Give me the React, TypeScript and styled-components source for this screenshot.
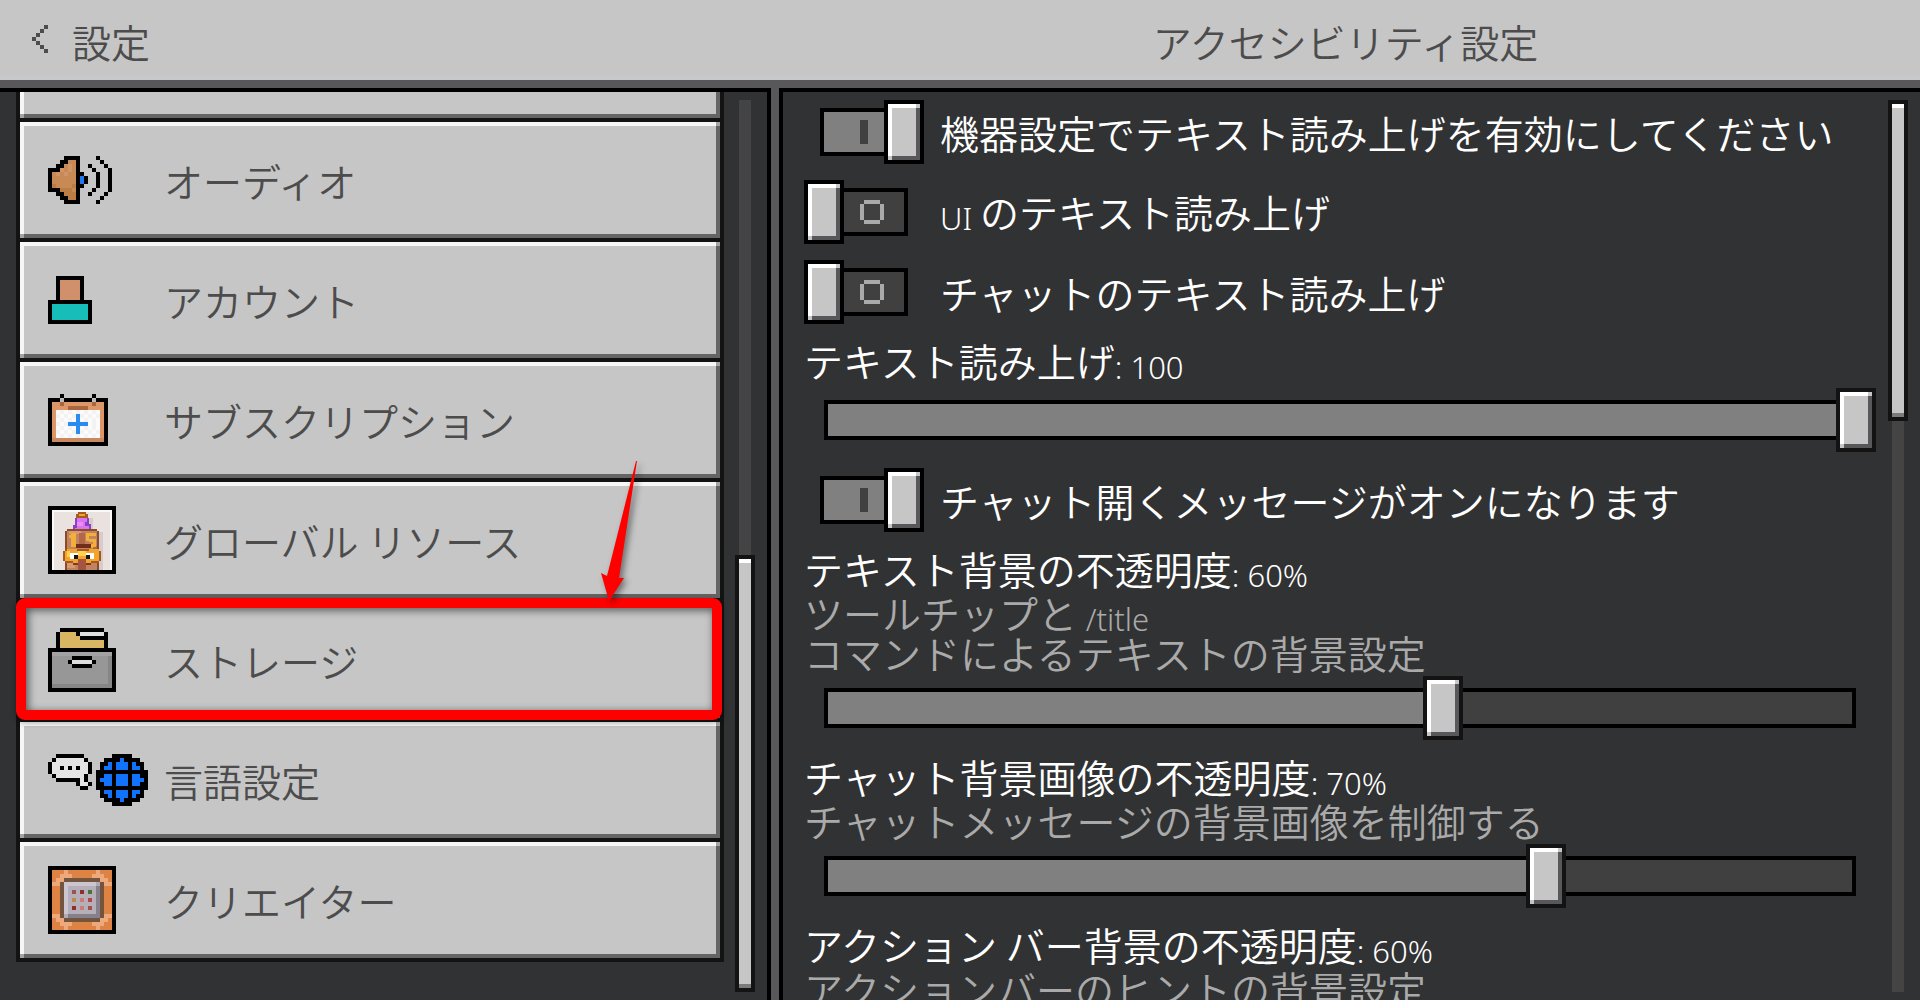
import React, { useState } from "react";
import styled, { createGlobalStyle, css } from "styled-components";

const GlobalStyle = createGlobalStyle`
  *, *::before, *::after { box-sizing: border-box; }
  body { margin: 0; background: #313233; }
  button, input { font: inherit; color: inherit; }
`;

const bevel = (light: string, face: string, dark: string, corner: string) => css`
  background:
    linear-gradient(${corner}, ${corner}) right top / 4px 4px no-repeat,
    linear-gradient(${corner}, ${corner}) left bottom / 4px 4px no-repeat,
    linear-gradient(${light}, ${light}) left top / 100% 4px no-repeat,
    linear-gradient(${light}, ${light}) left top / 4px 100% no-repeat,
    linear-gradient(${dark}, ${dark}) left bottom / 100% 4px no-repeat,
    linear-gradient(${dark}, ${dark}) right top / 4px 100% no-repeat,
    ${face};
`;

const Screen = styled.div`
  height: 100vh;
  display: grid;
  grid-template-rows: auto minmax(0, 1fr);
  background: #58585a;
  color: #fff;
  font-family: "Noto Sans CJK JP", "Noto Sans", sans-serif;
  font-size: 39px;
  font-weight: 350;
  line-height: 40px;
  overflow: hidden;
`;

const columns = css`
  display: grid;
  grid-template-columns: minmax(0, 771fr) minmax(0, 1141fr);
  column-gap: 8px;
`;

const Header = styled.header`
  ${columns}
  height: 80px;
  align-items: center;
  background: linear-gradient(#c6c6c6 76px, #c6c8ca 76px);
  color: #4c4c4c;
`;

const BackButton = styled.button`
  display: flex;
  align-items: center;
  gap: 24px;
  justify-self: start;
  padding: 2px 0 0 32px;
  border: 0;
  background: none;
  line-height: 40px;
`;

const Title = styled.h1`
  margin: 0;
  padding: 2px 8px 0 0;
  font: inherit;
  text-align: center;
`;

const Panels = styled.main`
  ${columns}
  padding-top: 8px;
`;

const Sidebar = styled.nav`
  display: grid;
  grid-template-columns: minmax(0, 1fr) 20px;
  column-gap: 11px;
  padding: 0 12px 0 16px;
  border: solid #000;
  border-width: 4px 4px 0 0;
  background: #313233;
  overflow: hidden;
`;

const ListArea = styled.div`
  min-height: 0;
  display: flex;
  flex-direction: column;
  justify-content: flex-end;
  padding-bottom: 38px;
`;

const List = styled.ul`
  display: flex;
  flex-direction: column;
  gap: 4px;
  margin: 0;
  padding: 4px;
  list-style: none;
  background: #131313;
`;

const Item = styled.li`
  position: relative;
`;

const face = css`
  ${bevel("#f7f7f7", "#c6c6c6", "#656565", "#a4a4a4")}
`;

const EmptyItem = styled.li`
  height: 116px;
  ${face}
`;

const ItemButton = styled.button`
  ${face}
  display: flex;
  align-items: center;
  width: 100%;
  height: 116px;
  padding: 0 28px;
  border: 0;
  color: #4c4c4c;
  text-align: left;
`;

const IconSlot = styled.span`
  flex: 0 0 116px;
  display: flex;
`;

const Highlight = styled.div`
  position: absolute;
  inset: -4px -2px -2px -4px;
  z-index: 1;
  border: 10px solid #fe0000;
  border-radius: 9px;
  box-shadow: 0 2px 6px rgba(0, 0, 0, 0.4), inset 2px 2px 8px rgba(0, 0, 0, 0.6);
  pointer-events: none;
`;

const Arrow = styled.svg`
  position: absolute;
  right: 80px;
  top: -143px;
  z-index: 2;
  overflow: visible;
  filter: drop-shadow(3px 3px 3px rgba(0, 0, 0, 0.45));
  pointer-events: none;
`;

const ScrollColumn = styled.div<{ $end?: boolean }>`
  display: flex;
  flex-direction: column;
  justify-content: ${(p) => (p.$end ? "flex-end" : "flex-start")};
  margin: 8px 0;
  background: linear-gradient(#444, #444) center / 12px 100% no-repeat;
`;

const ScrollThumb = styled.div<{ $size: number }>`
  height: ${(p) => p.$size}%;
  border: 4px solid #131313;
  background:
    linear-gradient(#fff, #fff) top / 100% 4px no-repeat,
    linear-gradient(#7b7b7b, #7b7b7b) bottom / 100% 4px no-repeat,
    #c6c6c6;
`;

const Content = styled.section`
  display: grid;
  grid-template-columns: minmax(0, 1fr) 20px;
  column-gap: 12px;
  padding: 0 12px 0 21px;
  border: solid #000;
  border-width: 4px 0 0 4px;
  background: #313233;
  overflow: hidden;
`;

const Settings = styled.div`
  min-height: 0;
  display: flex;
  flex-direction: column;
  gap: 16px;
  padding-top: 8px;
  white-space: nowrap;
  & > * { flex: none; }
`;

const ToggleRow = styled.label`
  display: flex;
  align-items: center;
  gap: 16px;
  height: 64px;
`;

const fill = (c: string) => `linear-gradient(${c}, ${c})`;
const knob = bevel("#fff", "#c6c6c6", "#58585a", "#c6c6c6");

const Switch = styled.input`
  appearance: none;
  flex: none;
  width: 120px;
  height: 64px;
  margin: 0;
  background:
    ${fill("#aaa")} 60px 20px / 16px 4px no-repeat,
    ${fill("#aaa")} 60px 40px / 16px 4px no-repeat,
    ${fill("#aaa")} 56px 24px / 4px 16px no-repeat,
    ${fill("#aaa")} 76px 24px / 4px 16px no-repeat,
    ${fill("#404040")} 20px 12px / 80px 40px no-repeat,
    ${fill("#000")} 16px 8px / 88px 48px no-repeat;

  &::before {
    content: "";
    display: block;
    width: 40px;
    height: 64px;
    border: 4px solid #000;
    ${knob}
  }

  &:checked {
    background:
      ${fill("#404040")} 56px 20px / 8px 24px no-repeat,
      ${fill("#808080")} 20px 12px / 80px 40px no-repeat,
      ${fill("#000")} 16px 8px / 88px 48px no-repeat;
  }

  &:checked::before { margin-left: 80px; }
`;

const Field = styled.div`
  display: flex;
  flex-direction: column;
`;

const FieldLabel = styled.label`
  display: block;
  height: 40px;
  margin-bottom: 4px;
`;

const Description = styled.p`
  margin: 0;
  color: #aaa;
`;

const Line = styled.span`
  display: block;
  height: 40px;
`;

const Latin = styled.span`
  font-family: "Noto Sans", sans-serif;
  font-size: 31px;
  font-weight: 300;
  line-height: 1;
  vertical-align: -2px;
`;

const Range = styled.input`
  appearance: none;
  display: block;
  width: 100%;
  height: 64px;
  margin: 4px 0 0;
  background:
    ${fill("#808080")} 24px 16px / calc((100% - 40px) * var(--value) - 4px) 32px no-repeat,
    ${fill("#404040")} 24px 16px / calc(100% - 48px) 32px no-repeat,
    ${fill("#000")} 20px 12px / calc(100% - 40px) 40px no-repeat;

  &::-webkit-slider-thumb {
    appearance: none;
    width: 40px;
    height: 64px;
    box-sizing: border-box;
    border: 4px solid #131313;
    ${knob}
  }
`;

const Svg = styled.svg`
  display: block;
  flex: none;
  shape-rendering: crispEdges;
`;

type Palette = Record<string, string>;

/* Draws one 4px square per character; characters without a colour stay clear. */
function PixelArt({ rows, palette }: { rows: string[]; palette: Palette }) {
  const cols = Math.max(...rows.map((r) => r.length));
  const cells: React.ReactNode[] = [];
  rows.forEach((row, y) => {
    let x = 0;
    while (x < row.length) {
      const key = row[x];
      let end = x + 1;
      while (end < row.length && row[end] === key) end++;
      if (palette[key]) cells.push(<rect key={`${x}-${y}`} x={x} y={y} width={end - x} height={1} fill={palette[key]} />);
      x = end;
    }
  });
  return (
    <Svg width={cols * 4} height={rows.length * 4} viewBox={`0 0 ${cols} ${rows.length}`} aria-hidden="true">
      {cells}
    </Svg>
  );
}

const chevron = ["...#", "..#.", ".#..", "#...", ".#..", "..#.", "...#", "...."];

const speaker = [
  "....####....#...",
  "...##oo#.....#..",
  "..##olo#..#...#.",
  "###lolo#...#...#",
  "#ololoo##...#..#",
  "#oooooo#b#..#..#",
  "#oooooo#b#..#..#",
  "#dooood##...#..#",
  "###dddo#...#...#",
  "..##ddd#..#...#.",
  "...##dd#.....#..",
  "....####....#...",
];

const account = [
  "..#######..",
  "..#sssss#..",
  "..#sssss#..",
  "..#sssss#..",
  "..#sssss#..",
  "..#sssss#..",
  "###########",
  "#ttttttttt#",
  "#ttttttttt#",
  "#ttttttttt#",
  "#ttttttttt#",
  "###########",
];

const calendar = [
  "...#.......#...",
  "###g#######g###",
  "#oodooooooodoo#",
  "#oooodddddoooo#",
  "#owvwvwvwvwvwo#",
  "#ovwvwvbvwvwvo#",
  "#owvwvwbwvwvwo#",
  "#ovwvbbbbbwvwo#",
  "#owvwvwbwvwvwo#",
  "#ovwvwvbvwvwvo#",
  "#owvwvwvwvwvwo#",
  "#ppppppppppppp#",
  "###############",
];

const storage = [
  "...###########...",
  "..#yyyy#wwwwww#..",
  "..#yyyyy#######..",
  "..#yyyyyyyyyyy#..",
  "..#yyyyyyyyyyy#..",
  "#################",
  "#lllllllllllllll#",
  "#ggggg#####ggggd#",
  "#gggg#wwwww#gggd#",
  "#ggggg#####ggggd#",
  "#ggggggggggggggd#",
  "#ggggggggggggggd#",
  "#ggggggggggggggd#",
  "#ggggggggggggggd#",
  "#ddddddddddddddd#",
  "#################",
];

const language = [
  "..#######.......#####....",
  ".#wwwwwww#....####b####..",
  "#wwwwwwwww#..##b#bbb#b##.",
  "#ww#w#w#ww#..#bb#bbb#bb#.",
  "#wwwwwwwww#.#############",
  ".#wwwwwww#..##bb#bbb#bb##",
  "..######w#..#bbb#bbb#bbb#",
  ".......#ww#.##bb#bbb#bb##",
  "........##..#############",
  ".............#bb#bbb#bb#.",
  ".............##b#bbb#b##.",
  "..............####b####..",
  "................#####....",
];

const creator = [
  "#################",
  "#ooopooooooopooo#",
  "#oopppooooopppoo#",
  "#oppfffffffffppo#",
  "#ppfllllllllmfpp#",
  "#oofliiiiiiikfoo#",
  "#oofliriqinikfoo#",
  "#oofliiiiiiikfoo#",
  "#oofliyisieikfoo#",
  "#oofliiiiiiikfoo#",
  "#oofliqisirikfoo#",
  "#oofliiiiiiikfoo#",
  "#ppfmkkkkkkkkfpp#",
  "#oppfffffffffppo#",
  "#oopppooooopppoo#",
  "#ooopooooooopooo#",
  "#################",
];

function MascotIcon() {
  return (
    <Svg width="68" height="68" viewBox="0 0 68 68" aria-hidden="true">
      <path fill="#000" d="M0 0h68v68H0z" />
      <path fill="#fbf9f8" d="M4 4h60v60H4z" />
      <path fill="#e9e2df" d="M6 6h56v58H6z" />
      <path fill="#d5cccb" d="M41 12h4v11h-4zM51 26h4v38h-4z" />
      <path fill="#a85a1c" d="M30 6h8v2h2v6H28V8h2z" />
      <path fill="#f0a43c" d="M31 8h6v2h-6z" />
      <path fill="#8c3fc4" d="M27 12h14v6h2v7H25v-6h2z" />
      <path fill="#d774f0" d="M29 12h10v4h-2v4h4v4H27v-2h2z" />
      <path fill="#f08af0" d="M29 16h6v4h-6z" />
      <path fill="#8a4a2c" d="M19 23h30v2h2v39H17V25h2z" />
      <path fill="#c3835f" d="M19 25h30v39H19z" />
      <path fill="#d69a72" d="M21 25h12v3H21zM19 54h8v8h-8z" />
      <path fill="#b06848" d="M31 27h6v11h-6zM45 40h4v4h-4z" />
      <path fill="#f2b03a" d="M23 27h5v14h-5zM21 29h2v3h-2zM38 27h10v3H38zM38 30h3v5h-3zM41 33h7v8h-3v-5h-4zM38 38h7v4h-7z" />
      <path fill="#6f2d1b" d="M28 38h15v4H28z" />
      <path fill="#a85a1c" d="M17 43h34v2h2v10h-2v2H17v-2h-2V45h2z" />
      <path fill="#f2a42c" d="M19 43h10v2h12v-2h10v12h-8v3H25v-3h-8V45h2z" />
      <path fill="#ffd257" d="M30 45h8v5h-8zM19 45h3v6h-3z" />
      <path fill="#fff" d="M22 47h8v6h-8zM38 47h8v6h-8z" />
      <path fill="#151515" d="M26 49h4v4h-4zM38 49h4v4h-4z" />
      <path fill="#a55440" d="M30 53h8v11h-8z" />
      <path fill="#7d3a28" d="M25 57h5v2h-5zM38 57h5v2h-5z" />
    </Svg>
  );
}

const items: { label: string; icon: React.ReactNode; marked?: boolean }[] = [
  { label: "オーディオ", icon: <PixelArt rows={speaker} palette={{ "#": "#000", o: "#c78a54", l: "#d09468", d: "#bb7d43", b: "#1f78ee" }} /> },
  { label: "アカウント", icon: <PixelArt rows={account} palette={{ "#": "#000", s: "#d0906b", t: "#17bdb9" }} /> },
  { label: "サブスクリプション", icon: <PixelArt rows={calendar} palette={{ "#": "#000", g: "#b9b9b9", o: "#dc9668", p: "#c98860", d: "#a9663d", w: "#fbfbfb", v: "#f3f3f3", b: "#2a8cf0" }} /> },
  { label: "グローバル リソース", icon: <MascotIcon /> },
  { label: "ストレージ", marked: true, icon: <PixelArt rows={storage} palette={{ "#": "#000", y: "#d9b661", w: "#dedede", l: "#a2a2a2", g: "#979797", d: "#868686" }} /> },
  { label: "言語設定", icon: <PixelArt rows={language} palette={{ "#": "#000", w: "#e4e4e4", b: "#1173fb" }} /> },
  {
    label: "クリエイター",
    icon: (
      <PixelArt
        rows={creator}
        palette={{ "#": "#000", o: "#de8344", p: "#eda87c", f: "#73543f", l: "#cbc6d0", m: "#b0aab6", i: "#b5afb9", k: "#85808c", r: "#a0524f", q: "#8f2f2c", n: "#4b7434", y: "#b98a4a", s: "#c97f78", e: "#b84545" }}
      />
    ),
  },
];

function Toggle({ on, children }: { on?: boolean; children: React.ReactNode }) {
  const [checked, setChecked] = useState(!!on);
  return (
    <ToggleRow>
      <Switch type="checkbox" role="switch" checked={checked} onChange={(e) => setChecked(e.target.checked)} />
      <span>{children}</span>
    </ToggleRow>
  );
}

interface SliderProps {
  id: string;
  label: string;
  initial: number;
  unit?: string;
  description?: React.ReactNode;
}

function Slider({ id, label, initial, unit = "", description }: SliderProps) {
  const [value, setValue] = useState(initial);
  return (
    <Field>
      <FieldLabel htmlFor={id}>
        {label}
        <Latin>{`: ${value}${unit}`}</Latin>
      </FieldLabel>
      {description && <Description>{description}</Description>}
      <Range
        id={id}
        type="range"
        min={0}
        max={100}
        value={value}
        onChange={(e) => setValue(Number(e.target.value))}
        style={{ "--value": value / 100 } as React.CSSProperties}
      />
    </Field>
  );
}

export default function App() {
  return (
    <Screen>
      <GlobalStyle />
      <Header>
        <BackButton type="button">
          <PixelArt rows={chevron} palette={{ "#": "#4c4c4c" }} />
          設定
        </BackButton>
        <Title>アクセシビリティ設定</Title>
      </Header>
      <Panels>
        <Sidebar>
          <ListArea>
            <List>
              <EmptyItem />
              {items.map((item) => (
                <Item key={item.label}>
                  <ItemButton type="button">
                    <IconSlot>{item.icon}</IconSlot>
                    {item.label}
                  </ItemButton>
                  {item.marked && (
                    <>
                      <Highlight />
                      <Arrow width="40" height="144" viewBox="0 0 40 144" aria-hidden="true">
                        <path fill="#fe0000" d="M1 114 7 117 36 2h1L19 119h5L9 142z" />
                      </Arrow>
                    </>
                  )}
                </Item>
              ))}
            </List>
          </ListArea>
          <ScrollColumn $end>
            <ScrollThumb $size={49} />
          </ScrollColumn>
        </Sidebar>
        <Content>
          <Settings>
            <Toggle on>機器設定でテキスト読み上げを有効にしてください</Toggle>
            <Toggle>
              <Latin>UI </Latin>のテキスト読み上げ
            </Toggle>
            <Toggle>チャットのテキスト読み上げ</Toggle>
            <Slider id="speech-volume" label="テキスト読み上げ" initial={100} />
            <Toggle on>チャット開くメッセージがオンになります</Toggle>
            <Slider
              id="text-background"
              label="テキスト背景の不透明度"
              initial={60}
              unit="%"
              description={
                <>
                  <Line>ツールチップと <Latin>/title</Latin></Line>
                  <Line>コマンドによるテキストの背景設定</Line>
                </>
              }
            />
            <Slider
              id="chat-background"
              label="チャット背景画像の不透明度"
              initial={70}
              unit="%"
              description={<Line>チャットメッセージの背景画像を制御する</Line>}
            />
            <Slider
              id="actionbar-background"
              label="アクション バー背景の不透明度"
              initial={60}
              unit="%"
              description={<Line>アクションバーのヒントの背景設定</Line>}
            />
          </Settings>
          <ScrollColumn>
            <ScrollThumb $size={36} />
          </ScrollColumn>
        </Content>
      </Panels>
    </Screen>
  );
}
